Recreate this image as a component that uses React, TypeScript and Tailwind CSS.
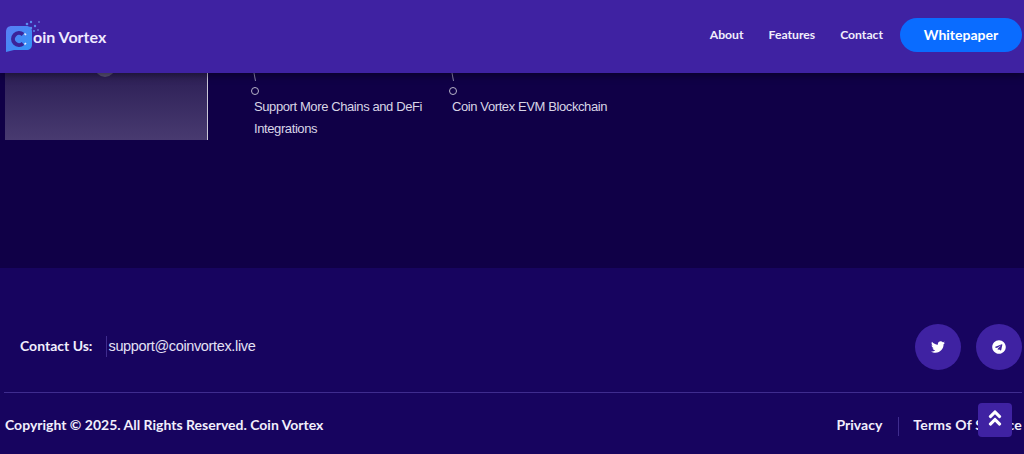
import { FaTwitter, FaTelegram, FaAngleDoubleUp } from "react-icons/fa";

const Logo = () => (
  <div className="flex items-center">
    <svg width="34" height="33" viewBox="0 0 34 33" className="shrink-0">
      <defs>
        <linearGradient id="logoFill" x1="0" y1="0" x2="1" y2="1">
          <stop offset="0" stopColor="#5b7df5" />
          <stop offset="1" stopColor="#2f95f7" />
        </linearGradient>
      </defs>
      <path d="M0 12 C0 8 2 6 6 6 L20 6 C24 6 26 8 26 12 L26 24 C26 28 24 30 20 30 L8 30 L0 32 Z" fill="url(#logoFill)" />
      <path d="M17 23.5 A6 6 0 1 1 17 14.5" fill="none" stroke="#3b2399" strokeWidth="4" />
      <path d="M18.5 13.5 L20 15 M18.5 24.5 L20 23" stroke="#e8ecff" strokeWidth="1.6" />
      <circle cx="21" cy="4" r="1.3" fill="#5a8df0" />
      <circle cx="25" cy="2" r="1.2" fill="#5a8df0" />
      <circle cx="29" cy="6" r="1.2" fill="#5a8df0" />
      <circle cx="25" cy="8" r="1.2" fill="#5a8df0" />
      <circle cx="33" cy="2" r="0.8" fill="#7aa5f5" />
      <circle cx="32" cy="10" r="0.8" fill="#7aa5f5" />
      <circle cx="28" cy="11" r="0.9" fill="#5a8df0" />
    </svg>
    <span className="-ml-[7px] font-['Lato',sans-serif] font-bold text-[16px] text-[#efeaff] mt-px">oin Vortex</span>
  </div>
);

const Milestone = ({ lines, width }: { lines: string[]; width: string }) => (
  <div className={`flex flex-col ${width}`}>
    <svg width="8" height="9" viewBox="0 0 8 9" className="ml-0.5">
      <path d="M1 0 L2.5 8" stroke="#a9a4c4" strokeWidth="0.8" fill="none" />
    </svg>
    <div className="w-2 h-2 mt-[5px] rounded-full border border-[#b7b3c8]" />
    <div className="mt-px font-['Liberation_Sans',sans-serif] text-[13px] tracking-[-0.4px] leading-[22px] text-[#d8d5e6] pl-[3px]">
      {lines.map((l) => (
        <div key={l}>{l}</div>
      ))}
    </div>
  </div>
);

export default function App() {
  return (
    <div className="w-[1024px] h-[454px] overflow-hidden relative bg-[#100047] font-['Lato',sans-serif]">
      <header className="h-[73px] bg-[#3f22a2] flex items-center justify-between pl-[6px] pr-[2px] relative z-10 shadow-[0_2px_8px_rgba(0,0,0,0.45)]">
        <Logo />
        <nav className="flex items-center pb-[3px] text-[12.2px] font-bold text-[#f1eefc]">
          <a className="mr-[25px]">About</a>
          <a className="mr-[25px]">Features</a>
          <a className="mr-[17px]">Contact</a>
          <a className="w-[122px] h-[34px] pb-[2px] rounded-full bg-[#0a6cff] text-white text-[14px] flex items-center justify-center">Whitepaper</a>
        </nav>
      </header>

      <section className="h-[195px] flex pl-[5px]">
        <div className="relative w-[203px] h-[67px] overflow-hidden border-r border-[#c9c6d6] bg-gradient-to-b from-[#2d1f56] to-[#483a70]">
          <div className="absolute left-[90px] -top-[16px] w-[20px] h-[20px] rounded-full bg-[#5b5378]" />
        </div>
        <div className="ml-[43px] w-[198px]">
          <Milestone lines={["Support More Chains and DeFi", "Integrations"]} width="w-[198px]" />
        </div>
        <Milestone lines={["Coin Vortex EVM Blockchain"]} width="w-[190px]" />
      </section>

      <footer className="h-[186px] bg-[#17045f] pl-[4px] pr-[2px] flex flex-col">
        <div className="h-[125px] flex items-center justify-between border-b border-[#3f2c8e] pt-[33px]">
          <div className="flex items-center pl-[16px]">
            <span className="mb-[3px] font-bold text-[14px] text-[#f1eefc]">Contact Us:</span>
            <span className="ml-[14px] pl-px border-l border-[#3f2c8e] font-['Liberation_Sans',sans-serif] text-[14.5px] tracking-[-0.35px] text-[#e4e1f5]">support@coinvortex.live</span>
          </div>
          <div className="flex gap-[15px]">
            <div className="w-[46px] h-[46px] rounded-full bg-[#3f22a2] flex items-center justify-center text-white text-[14px]">
              <FaTwitter />
            </div>
            <div className="w-[46px] h-[46px] rounded-full bg-[#3f22a2] flex items-center justify-center text-white text-[14px]">
              <FaTelegram />
            </div>
          </div>
        </div>
        <div className="flex-1 flex items-center justify-between pl-px pt-[2px] text-[14px] font-bold text-[#f1eefc]">
          <span>Copyright © 2025. All Rights Reserved. Coin Vortex</span>
          <div className="flex items-center">
            <span>Privacy</span>
            <span className="h-[19px] w-px mt-[4px] bg-[#3f2c8e] ml-[16px] mr-[14px]" />
            <span className="whitespace-nowrap tracking-[0.2px]">Terms Of Service</span>
          </div>
        </div>
      </footer>

      <button className="absolute left-[978px] top-[403px] w-[34px] h-[34px] rounded-[4px] bg-[#3f22a2] text-white flex items-center justify-center text-[20px] pb-1">
        <FaAngleDoubleUp />
      </button>
    </div>
  );
}
